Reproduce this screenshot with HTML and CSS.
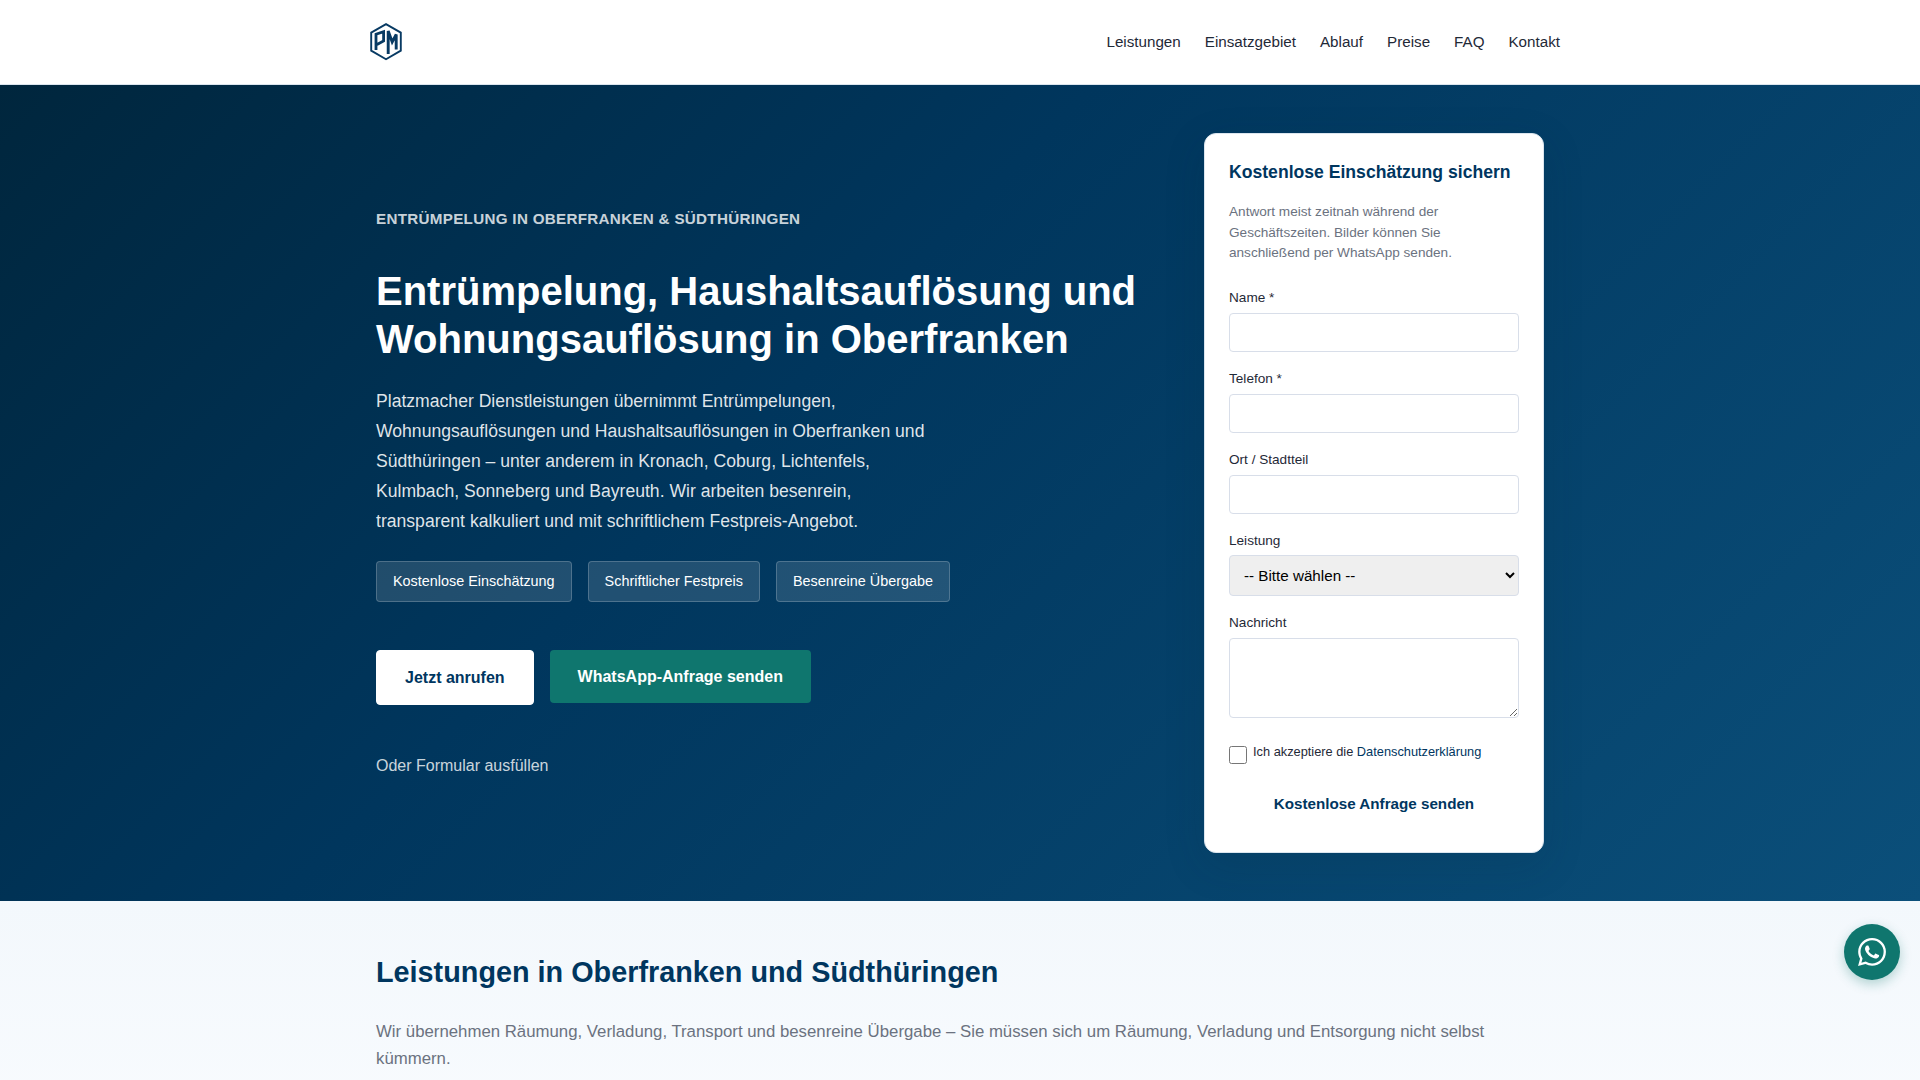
FILE: index.html
```
<!DOCTYPE html>
<html lang="de">
<head>
<meta charset="UTF-8">
<meta name="viewport" content="width=device-width, initial-scale=1.0">
<title>Platzmacher Dienstleistungen</title>
<link rel="stylesheet" href="styles.css">
</head>
<body>
  <header class="header">
    <div class="header-inner">
      <a class="logo" href="#" aria-label="Platzmacher">
        <svg viewBox="0 0 34 40" width="34" height="40" fill="none" stroke="#083a63">
          <path d="M17 2.2 L31.8 10.6 V28.6 L17 37.2 L2.2 28.6 V10.6 Z" stroke-width="1.9"/>
          <path d="M7 28 V12.2 L14.6 9.6 V19 L8 22.6" stroke-width="2.8"/>
          <path d="M19.2 32 V9 L23.2 20 L27.2 12.5 V27.5" stroke-width="2.9"/>
        </svg>
      </a>
      <nav class="nav">
        <a href="#leistungen">Leistungen</a>
        <a href="#">Einsatzgebiet</a>
        <a href="#">Ablauf</a>
        <a href="#">Preise</a>
        <a href="#">FAQ</a>
        <a href="#">Kontakt</a>
      </nav>
    </div>
  </header>

  <section class="hero">
    <div class="container hero-grid">
      <div class="hero-content">
        <p class="kicker">Entrümpelung in Oberfranken &amp; Südthüringen</p>
        <h1>Entrümpelung, Haushaltsauflösung und Wohnungsauflösung in Oberfranken</h1>
        <p class="lead">Platzmacher Dienstleistungen übernimmt Entrümpelungen, Wohnungsauflösungen und Haushaltsauflösungen in Oberfranken und Südthüringen – unter anderem in Kronach, Coburg, Lichtenfels, Kulmbach, Sonneberg und Bayreuth. Wir arbeiten besenrein, transparent kalkuliert und mit schriftlichem Festpreis-Angebot.</p>
        <div class="badges">
          <span class="badge">Kostenlose Einschätzung</span>
          <span class="badge">Schriftlicher Festpreis</span>
          <span class="badge">Besenreine Übergabe</span>
        </div>
        <div class="buttons">
          <a class="btn btn-call" href="#">Jetzt anrufen</a>
          <a class="btn btn-whatsapp" href="#">WhatsApp-Anfrage senden</a>
        </div>
        <a class="form-link" href="#formular">Oder Formular ausfüllen</a>
      </div>

      <form class="card" id="formular">
        <h2>Kostenlose Einschätzung sichern</h2>
        <p class="card-text">Antwort meist zeitnah während der Geschäftszeiten. Bilder können Sie anschließend per WhatsApp senden.</p>
        <div class="field">
          <label for="name">Name *</label>
          <input type="text" id="name">
        </div>
        <div class="field">
          <label for="telefon">Telefon *</label>
          <input type="tel" id="telefon">
        </div>
        <div class="field">
          <label for="ort">Ort / Stadtteil</label>
          <input type="text" id="ort">
        </div>
        <div class="field field-select">
          <label for="leistung">Leistung</label>
          <select id="leistung">
            <option>-- Bitte wählen --</option>
          </select>
        </div>
        <div class="field">
          <label for="nachricht">Nachricht</label>
          <textarea id="nachricht"></textarea>
        </div>
        <div class="consent">
          <input type="checkbox" id="datenschutz">
          <label for="datenschutz">Ich akzeptiere die <a href="#">Datenschutzerklärung</a></label>
        </div>
        <button class="submit" type="button">Kostenlose Anfrage senden</button>
      </form>
    </div>
  </section>

  <section class="services" id="leistungen">
    <div class="container">
      <h2>Leistungen in Oberfranken und Südthüringen</h2>
      <p>Wir übernehmen Räumung, Verladung, Transport und besenreine Übergabe – Sie müssen sich um Räumung, Verladung und Entsorgung nicht selbst kümmern.</p>
    </div>
  </section>

  <a class="whatsapp-float" href="#" aria-label="WhatsApp">
    <svg viewBox="0 0 24 24" width="28" height="28" fill="#fff">
      <path d="M17.472 14.382c-.297-.149-1.758-.867-2.03-.967-.273-.099-.471-.148-.67.15-.197.297-.767.966-.94 1.164-.173.199-.347.223-.644.075-.297-.15-1.255-.463-2.39-1.475-.883-.788-1.48-1.761-1.653-2.059-.173-.297-.018-.458.13-.606.134-.133.298-.347.446-.52.149-.174.198-.298.298-.497.099-.198.05-.371-.025-.52-.075-.149-.669-1.612-.916-2.207-.242-.579-.487-.5-.669-.51-.173-.008-.371-.01-.57-.01-.198 0-.52.074-.792.372-.272.297-1.04 1.016-1.04 2.479 0 1.462 1.065 2.875 1.213 3.074.149.198 2.096 3.2 5.077 4.487.709.306 1.262.489 1.694.625.712.227 1.36.195 1.871.118.571-.085 1.758-.719 2.006-1.413.248-.694.248-1.289.173-1.413-.074-.124-.272-.198-.57-.347m-5.421 7.403h-.004a9.87 9.87 0 01-5.031-1.378l-.361-.214-3.741.982.998-3.648-.235-.374a9.86 9.86 0 01-1.51-5.26c.001-5.45 4.436-9.884 9.888-9.884 2.64 0 5.122 1.03 6.988 2.898a9.825 9.825 0 012.893 6.994c-.003 5.45-4.437 9.884-9.885 9.884m8.413-18.297A11.815 11.815 0 0012.05 0C5.495 0 .16 5.335.157 11.892c0 2.096.547 4.142 1.588 5.945L.057 24l6.305-1.654a11.882 11.882 0 005.683 1.448h.005c6.554 0 11.890-5.335 11.893-11.893a11.821 11.821 0 00-3.480-8.413z"/>
    </svg>
  </a>
</body>
</html>
```
FILE: styles.css
```
* {
  box-sizing: border-box;
}

body {
  margin: 0;
  font-family: "Liberation Sans", Arial, sans-serif;
  font-size: 16px;
  line-height: 1.6;
  color: #1f2937;
  background: #f5f9fd;
  overflow: hidden;
}

a {
  text-decoration: none;
}

.header {
  height: 85px;
  background: #fff;
  border-bottom: 1px solid #dbe5ee;
}

.header-inner {
  display: flex;
  align-items: center;
  justify-content: space-between;
  max-width: 1200px;
  height: 84px;
  margin: 0 auto;
  padding-left: 9px;
}

.logo svg {
  display: block;
}

.nav {
  display: flex;
  gap: 24px;
}

.nav a {
  font-size: 15.2px;
  color: #1f2937;
}

.container {
  max-width: 1200px;
  margin: 0 auto;
  padding: 0 16px;
}

.hero {
  padding: 48px 0;
  color: #fff;
  background: linear-gradient(135deg, #00263d 0%, #00365d 40%, #0b4f7a 100%);
}

.hero-grid {
  display: grid;
  grid-template-columns: 1fr 340px;
  gap: 48px;
  align-items: center;
}

.kicker {
  margin: 0 0 36px;
  font-size: 15.2px;
  font-weight: bold;
  letter-spacing: 0.3px;
  text-transform: uppercase;
  color: rgba(255, 255, 255, 0.8);
}

.hero h1 {
  margin: 0 0 24px;
  font-size: 40px;
  line-height: 1.2;
}

.lead {
  max-width: 560px;
  margin: 0 0 24px;
  font-size: 17.6px;
  line-height: 1.7;
  color: rgba(255, 255, 255, 0.88);
}

.badges {
  display: flex;
  gap: 16px;
  margin-bottom: 48px;
}

.badge {
  padding: 8px 16px;
  font-size: 14.4px;
  border: 1px solid rgba(255, 255, 255, 0.2);
  border-radius: 4px;
  background: rgba(255, 255, 255, 0.13);
}

.buttons {
  display: flex;
  align-items: flex-start;
  gap: 16px;
  margin-bottom: 48px;
}

.btn {
  padding: 14px 28px;
  font-weight: bold;
  border-radius: 4px;
}

.btn-call {
  color: #00365f;
  background: #fff;
  border: 1px solid #fff;
}

.btn-whatsapp {
  color: #fff;
  background: #0f766e;
}

.form-link {
  color: rgba(255, 255, 255, 0.8);
}

/* Form card */
.card {
  height: 720px;
  padding: 24px;
  color: #1f2937;
  background: #fff;
  border: 1px solid #dbe5ee;
  border-radius: 12px;
  box-shadow: 0 12px 40px rgba(0, 38, 63, 0.15);
}

.card h2 {
  margin: 0 0 16.3px;
  font-size: 17.6px;
  line-height: 28px;
  color: #00365f;
}

.card-text {
  margin: 0 0 23.5px;
  font-size: 13.6px;
  line-height: 1.5;
  color: #6b7280;
}

.field {
  margin-bottom: 16px;
}

.field label {
  display: block;
  margin-bottom: 4px;
  font-size: 13.6px;
  line-height: 22px;
}

.field-select label {
  margin-bottom: 3px;
}

.field input,
.field select,
.field textarea {
  display: block;
  width: 100%;
  height: 39px;
  padding: 10px;
  font-family: inherit;
  font-size: 15.2px;
  border: 1px solid #d8dee9;
  border-radius: 4px;
}

.field select {
  height: 41px;
}

.field textarea {
  height: 80px;
  resize: vertical;
}

.consent {
  display: flex;
  align-items: flex-start;
  gap: 6px;
  margin: 24px 0 17px;
  font-size: 12.8px;
}

.consent input {
  width: 18px;
  height: 18px;
  margin: 4px 0 0;
}

.consent a {
  color: #00365f;
}

.submit {
  width: 100%;
  padding: 14px;
  font-family: inherit;
  font-size: 15.2px;
  font-weight: bold;
  color: #00365f;
  background: #fff;
  border: 0;
}

.services {
  padding: 48px 0;
  background: linear-gradient(#f3f8fc, #f8fbfe);
}

.services h2 {
  margin: 0 0 24px;
  font-size: 28.8px;
  color: #00365f;
}

.services p {
  margin: 0;
  font-size: 16.8px;
  color: #6b7280;
}

.whatsapp-float {
  position: fixed;
  right: 20px;
  bottom: 100px;
  display: flex;
  align-items: center;
  justify-content: center;
  width: 56px;
  height: 56px;
  border-radius: 50%;
  background: #0f766e;
  box-shadow: 0 4px 12px rgba(15, 118, 110, 0.3);
}
```
